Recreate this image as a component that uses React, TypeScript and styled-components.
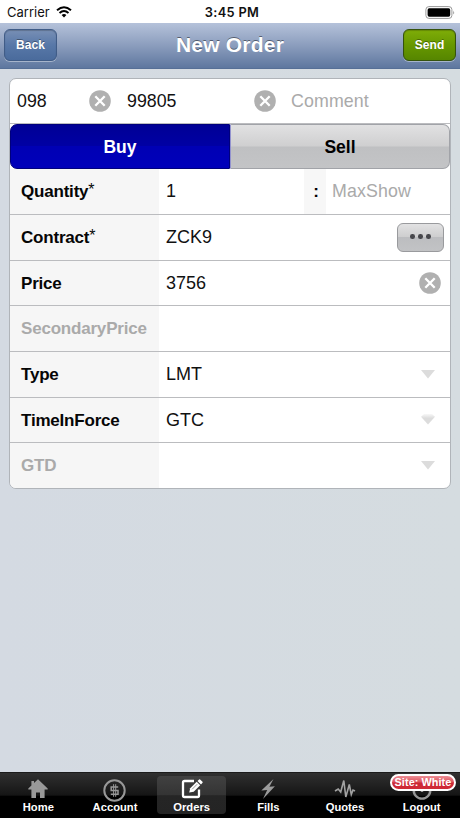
import React from 'react';
import styled, { createGlobalStyle } from 'styled-components';

const Global = createGlobalStyle`
  * { box-sizing: border-box; }
  body { margin: 0; font-family: "Liberation Sans", Arial, sans-serif; background: #d5dae0; }
  button { font-family: inherit; margin: 0; padding: 0; }
`;

const Screen = styled.div`
  width: 460px;
  height: 818px;
  display: flex;
  flex-direction: column;
  overflow: hidden;
  background: linear-gradient(90deg, #d4dae2, #d5dce0);
`;

const StatusBar = styled.div`
  height: 23px;
  flex: none;
  background: #fff;
  display: grid;
  grid-template-columns: 1fr auto 1fr;
  align-items: center;
  padding: 1px 5px 0 7px;
  font-family: Inter, sans-serif;
  font-size: 13px;
  color: #111;
`;

const Carrier = styled.div`
  display: flex;
  align-items: center;
  gap: 6px;
  letter-spacing: 0;
`;

const Clock = styled.div`
  font-weight: 600;
  font-size: 12.8px;
  letter-spacing: 0.35px;
  padding-left: 2px;
`;

const BatterySlot = styled.div`
  display: flex;
  justify-content: flex-end;
`;

const NavBar = styled.header`
  height: 46px;
  flex: none;
  display: flex;
  justify-content: space-between;
  align-items: flex-start;
  padding: 6px 4px 0;
  background: linear-gradient(#b5c2da, #8b9dbd 50%, #5e779f);
  border-bottom: 1px solid #566f96;
`;

const NavButton = styled.button<{ $green?: boolean }>`
  width: 53px;
  height: 32px;
  border-radius: 6px;
  border: 1px solid ${p => (p.$green ? '#35520d' : '#405c87')};
  background: ${p =>
    p.$green ? 'linear-gradient(#7fad08, #679800 50%, #568600)' : 'linear-gradient(#788fb5, #5878a8 50%, #4a6b9c)'};
  box-shadow: 0 1px 0 rgba(255, 255, 255, 0.4), inset 0 1px 1px rgba(0, 0, 0, 0.2);
  color: #fff;
  font-size: 12px;
  font-weight: bold;
  letter-spacing: 0.1px;
  text-shadow: 0 -1px 0 rgba(0, 0, 0, 0.35);
`;

const Title = styled.h1`
  margin: 0;
  font-size: 21px;
  line-height: 32px;
  letter-spacing: 0.2px;
  color: #fff;
  text-shadow: 0 -1px 0 rgba(0, 0, 0, 0.45);
`;

const Panel = styled.main`
  margin: 9px 9px 0;
  height: 411px;
  flex: none;
  border: 1px solid #b0b4b9;
  border-radius: 7px;
  background: #fff;
  overflow: hidden;
  display: grid;
  grid-template-rows: 45px 45px 46px 46px 45px 46px 46px 45px 45px;
`;

const Row = styled.div`
  display: flex;
  align-items: stretch;
  border-bottom: 1px solid #bbbcbf;
  &:last-child { border-bottom: 0; }
`;

const Label = styled.div<{ $dim?: boolean }>`
  width: 149px;
  flex: none;
  display: flex;
  align-items: center;
  padding: 1px 0 0 11px;
  background: #f6f6f6;
  color: ${p => (p.$dim ? '#aaa' : '#060606')};
  font-size: 17px;
  letter-spacing: -0.2px;
  font-weight: bold;
`;

const Required = styled.span`
  font-weight: normal;
  font-size: 16px;
  margin-bottom: 4px;
`;

const Value = styled.div`
  flex: 1;
  min-width: 0;
  display: flex;
  align-items: center;
  padding-left: 7px;
  color: #111;
  font-size: 18px;
`;

const Control = styled.div<{ $inset: number }>`
  display: flex;
  align-items: center;
  padding-right: ${p => p.$inset}px;
`;

const AccountField = styled.div<{ $width: number; $left: number }>`
  width: ${p => p.$width}px;
  display: flex;
  align-items: center;
  justify-content: space-between;
  padding-left: ${p => p.$left}px;
  font-size: 17.8px;
  color: #111;
`;

const Placeholder = styled.div<{ $left: number; $width?: number }>`
  ${p => (p.$width ? `width: ${p.$width}px;` : 'flex: 1;')}
  display: flex;
  align-items: center;
  padding-left: ${p => p.$left}px;
  font-size: 17.8px;
  letter-spacing: 0.12px;
  color: #aaa;
`;

const Colon = styled.div`
  width: 22px;
  display: flex;
  align-items: center;
  justify-content: center;
  padding: 1px 0 0 2px;
  background: #f7f7f7;
  font-size: 17px;
  font-weight: bold;
`;

const Segments = styled.div`
  display: grid;
  grid-template-columns: 220px 1fr;
`;

const Segment = styled.button<{ $active?: boolean }>`
  border: 1px solid ${p => (p.$active ? '#00007c' : '#a1a3a8')};
  border-left-color: ${p => (p.$active ? '#00007c' : '#9393cf')};
  border-radius: ${p => (p.$active ? '7px 0 0 7px' : '0 7px 7px 0')};
  background: ${p =>
    p.$active
      ? 'linear-gradient(#000095, #0000a4 49%, #0000b4 50%, #0000ba)'
      : 'linear-gradient(#e1e1e2, #cfcfd0 49%, #bfc0c2 51%, #c3c4c6)'};
  color: ${p => (p.$active ? '#fff' : '#000')};
  font-size: 17.5px;
  font-weight: bold;
  padding-top: 1px;
`;

const MoreButton = styled.button`
  width: 47px;
  height: 29px;
  display: flex;
  align-items: center;
  justify-content: center;
  gap: 3.6px;
  border: 1px solid #999a9d;
  border-radius: 6px;
  background: linear-gradient(#e2e2e3, #cececf 47%, #bcbdc0 50%, #c2c3c5);
  padding-bottom: 2px;
`;

const Dot = styled.span`
  width: 4.6px;
  height: 4.6px;
  border-radius: 50%;
  background: #47474c;
`;

const Spacer = styled.div`
  flex: 1;
`;

const TabBar = styled.nav`
  height: 46px;
  flex: none;
  display: grid;
  grid-template-columns: repeat(6, 1fr);
  background: linear-gradient(#303030, #151515 49%, #000 52%);
  border-top: 1px solid #1b1b1b;
`;

const Tab = styled.div<{ $active?: boolean }>`
  position: relative;
  height: 38px;
  margin: 3px 4px 0;
  display: flex;
  flex-direction: column;
  align-items: center;
  justify-content: space-between;
  padding: 3px 0 1px;
  border-radius: 4px;
  background: ${p => (p.$active ? 'linear-gradient(#414141, #343434 49%, #252525 52%, #242424)' : 'none')};
  svg { flex: none; display: block; }
`;

const TabText = styled.span`
  margin-top: -1px;
  color: #fff;
  font-size: 11.2px;
  line-height: 12px;
  font-weight: bold;
  white-space: nowrap;
`;

const SiteBadge = styled.div`
  position: absolute;
  top: -2px;
  right: 0;
  width: 66px;
  height: 17px;
  border: 2px solid #fff;
  border-radius: 9px;
  background: linear-gradient(#ed8f96, #dc4e59 48%, #cb2734 52%, #d02b38);
  color: #fff;
  font-size: 10.8px;
  line-height: 12.5px;
  font-weight: bold;
  letter-spacing: 0.1px;
  text-align: center;
  white-space: nowrap;
`;

const Wifi = () => (
  <svg width="16" height="12" viewBox="0 0 16 12" fill="none" stroke="#000" strokeWidth="2">
    <path d="M1 4.2 Q8 -1.8 15 4.2" />
    <path d="M3.5 7 Q8 3.1 12.5 7" />
    <path d="M8 11.5 L5.6 9 Q8 7 10.4 9Z" fill="#000" stroke="none" />
  </svg>
);

const Battery = () => (
  <svg width="30" height="13" viewBox="0 0 30 13">
    <rect x=".9" y=".6" width="26" height="11.8" rx="3" fill="none" stroke="#999" />
    <rect x="2.6" y="2.3" width="22.6" height="8.4" rx="1.6" />
    <path d="M28.2 4.5 Q30 6.5 28.2 8.5Z" fill="#999" />
  </svg>
);

const Clear = () => (
  <svg width="22" height="22" viewBox="0 0 22 22">
    <circle cx="11" cy="11" r="10.8" fill="#b0b0b0" />
    <path d="M6.3 6.3 15.7 15.7M15.7 6.3 6.3 15.7" stroke="#fff" strokeWidth="2.3" />
  </svg>
);

const Arrow = () => (
  <svg width="14" height="9" viewBox="0 0 14 9">
    <path d="M0 0H14L7 8.5Z" fill="#dcdcdc" />
  </svg>
);

const GlossyArrow = () => (
  <svg width="14" height="13" viewBox="0 0 14 13">
    <defs>
      <linearGradient id="arrowGloss" x1="0" y1="0" x2="0" y2="1">
        <stop offset="0" stopColor="#f8f8f8" />
        <stop offset="0.4" stopColor="#dcdcdc" />
        <stop offset="1" stopColor="#dcdcdc" />
      </linearGradient>
    </defs>
    <path d="M3 0H11L14 2.7L7 10.5L0 2.7Z" fill="url(#arrowGloss)" />
  </svg>
);

const HomeIcon = () => (
  <svg width="20" height="20" viewBox="0 0 20 20" fill="#999">
    <path d="M10 .2 19.7 9.5V10.5H16.6V19H12V13.5H8V19H3.4V10.5H.3V9.5L3.4 6.5V2H6V4Z" />
  </svg>
);

const AccountIcon = () => (
  <svg width="24" height="23" viewBox="0 0 24 23" fill="none" stroke="#989898">
    <circle cx="11.5" cy="11.5" r="10.2" strokeWidth="2" />
    <path d="M15.2 8H8.2V11.5H15V15.3H7.8" strokeWidth="1.5" />
    <path d="M10.6 5.2V17.8M12.7 5.2V17.8" strokeWidth="1" />
  </svg>
);

const OrdersIcon = () => (
  <svg width="22" height="20" viewBox="0 0 22 20">
    <path d="M13 2H3.5Q2 2 2 3.5V16.5Q2 18 3.5 18H16.5Q18 18 18 16.5V10.5" fill="none" stroke="#fff" strokeWidth="2.3" />
    <path d="M8.2 13.6 9.2 9.2 15.7 2.7 19.2 6.2 12.7 12.7Z" fill="#fff" />
    <path d="M16.5 1.9 18.1.4Q18.6 0 19.1.4L21.5 2.8Q22 3.3 21.5 3.8L20 5.4Z" fill="#fff" />
    <path d="M11.1 10.3 16.2 5.2" stroke="#555" strokeWidth=".6" />
  </svg>
);

const FillsIcon = () => (
  <svg width="14" height="20" viewBox="0 0 14 20">
    <path d="M12.5 0 .3 11.6 6.2 11 2 20 13.9 7.2 8.4 7.8Z" fill="#9b9b9b" />
  </svg>
);

const QuotesIcon = () => (
  <svg width="22" height="20" viewBox="0 0 22 20">
    <path
      d="M1 12 4.2 10 6.7 13 9.8 1.5 11.8 18 15.3 5.5 17.3 15.5 19 11 21 12"
      fill="none"
      stroke="#a2a2a2"
      strokeWidth="1.6"
    />
  </svg>
);

const PowerIcon = () => (
  <svg width="20" height="21" viewBox="0 0 20 21" fill="none" stroke="#969696" strokeWidth="2.4">
    <path d="M5.2 4.8A8.2 8.2 0 1 0 14.8 4.8M10 1V13" />
  </svg>
);

const tabs = [
  { name: 'Home', icon: <HomeIcon /> },
  { name: 'Account', icon: <AccountIcon /> },
  { name: 'Orders', icon: <OrdersIcon />, active: true },
  { name: 'Fills', icon: <FillsIcon /> },
  { name: 'Quotes', icon: <QuotesIcon /> },
  { name: 'Logout', icon: <PowerIcon />, badge: 'Site: White' },
];

type FieldProps = {
  label: string;
  value?: string;
  dim?: boolean;
  required?: boolean;
  inset?: number;
  children?: React.ReactNode;
};

const Field = ({ label, value, dim, required, inset = 9, children }: FieldProps) => (
  <Row>
    <Label $dim={dim}>{label}{required && <Required>*</Required>}</Label>
    <Value>{value}</Value>
    {children && <Control $inset={inset}>{children}</Control>}
  </Row>
);

export default function App() {
  return (
    <Screen>
      <Global />
      <StatusBar>
        <Carrier>Carrier <Wifi /></Carrier>
        <Clock>3:45 PM</Clock>
        <BatterySlot><Battery /></BatterySlot>
      </StatusBar>
      <NavBar>
        <NavButton>Back</NavButton>
        <Title>New Order</Title>
        <NavButton $green>Send</NavButton>
      </NavBar>
      <Panel>
        <Row>
          <AccountField $width={101} $left={7}>098<Clear /></AccountField>
          <AccountField $width={165} $left={16}>99805<Clear /></AccountField>
          <Placeholder $left={15}>Comment</Placeholder>
        </Row>
        <Segments>
          <Segment $active>Buy</Segment>
          <Segment>Sell</Segment>
        </Segments>
        <Row>
          <Label>Quantity<Required>*</Required></Label>
          <Value>1</Value>
          <Colon>:</Colon>
          <Placeholder $left={6} $width={124}>MaxShow</Placeholder>
        </Row>
        <Field label="Contract" required value="ZCK9" inset={6}>
          <MoreButton><Dot /><Dot /><Dot /></MoreButton>
        </Field>
        <Field label="Price" value="3756"><Clear /></Field>
        <Field label="SecondaryPrice" dim />
        <Field label="Type" value="LMT" inset={15}><Arrow /></Field>
        <Field label="TimeInForce" value="GTC" inset={15}><GlossyArrow /></Field>
        <Field label="GTD" dim inset={15}><Arrow /></Field>
      </Panel>
      <Spacer />
      <TabBar>
        {tabs.map(tab => (
          <Tab key={tab.name} $active={tab.active}>
            {tab.icon}
            <TabText>{tab.name}</TabText>
            {tab.badge && <SiteBadge>{tab.badge}</SiteBadge>}
          </Tab>
        ))}
      </TabBar>
    </Screen>
  );
}
